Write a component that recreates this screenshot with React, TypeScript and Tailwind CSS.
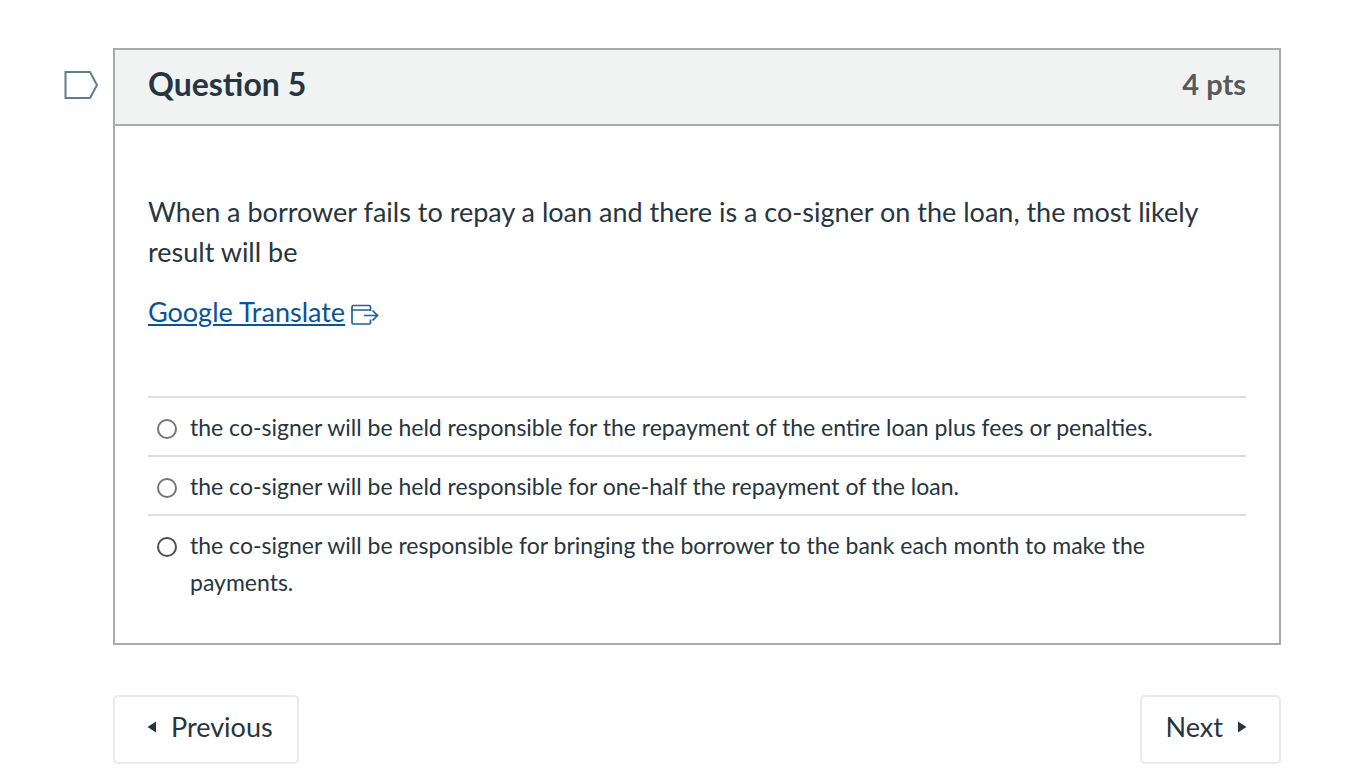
import React from "react";

const answers: string[] = [
  "the co-signer will be held responsible for the repayment of the entire loan plus fees or penalties.",
  "the co-signer will be held responsible for one-half the repayment of the loan.",
  "the co-signer will be responsible for bringing the borrower to the bank each month to make the payments.",
];

function FlagIcon() {
  return (
    <svg width="36" height="30" viewBox="0 0 36 30" fill="none" aria-hidden="true">
      <path d="M2.5 2H27L34 15L27 28H2.5Z" stroke="#5f7d90" strokeWidth="2" />
    </svg>
  );
}

function ExternalIcon() {
  return (
    <svg className="mt-[6px]" width="28" height="22" viewBox="0 0 28 22" fill="none" stroke="#1f5f9a" strokeWidth="1.7" aria-hidden="true">
      <path d="M19.5 7V3Q19.5 1.5 18 1.5H2.5Q1 1.5 1 3V18.5Q1 20 2.5 20H18Q19.5 20 19.5 18.5V15.5" />
      <path d="M1 6H19.5M13 11.5H26.5M21.5 6.5L26.5 11.5L21.5 16.5" />
    </svg>
  );
}

export default function App() {
  return (
    <main className="flex flex-col bg-white pt-12 pr-[85px] pb-1 pl-[63px] font-['Lato',sans-serif] text-[#273540]">
      <div className="flex items-start">
        <button type="button" aria-label="Flag question" className="mt-[22px] mr-[14px] shrink-0">
          <FlagIcon />
        </button>
        <section className="min-w-0 flex-1 border-2 border-[#aaaaaa]">
          <header className="flex items-center justify-between border-b-2 border-[#aaaaaa] bg-[#f1f3f3] px-[33px] pt-[14px] pb-5">
            <h1 className="text-[32px] leading-10 font-bold">Question 5</h1>
            <span className="text-[29px] leading-10 font-bold text-[#595959]">4 pts</span>
          </header>
          <div className="px-[33px] pt-[66px] pb-[33px]">
            <p className="text-[27px] leading-10">
              When a borrower fails to repay a loan and there is a co-signer on the loan, the most likely result will be
            </p>
            <p className="mt-5 text-[27px] leading-10">
              <a href="#translate" className="inline-flex items-center gap-[6px] text-[#0b5394]">
                <span className="underline">Google Translate</span>
                <ExternalIcon />
              </a>
            </p>
            <fieldset className="mt-[64px]">
              {answers.map((answer, i) => (
                <div key={answer} className="group flex items-start border-t-2 border-[#dddddd] pt-[11px] pb-[9px] pl-[9px]">
                  <input
                    type="radio"
                    name="answer"
                    id={`answer-${i}`}
                    className="mt-[10px] mr-[13px] size-5 shrink-0 appearance-none rounded-full border-2 border-[#767676] bg-white group-last:border-[#4f4f4f] checked:border-[6px]"
                  />
                  <label htmlFor={`answer-${i}`} className="text-[23px] leading-[37px]">
                    {answer}
                  </label>
                </div>
              ))}
            </fieldset>
          </div>
        </section>
      </div>
      <nav className="mt-[50px] ml-[50px] flex items-start justify-between text-[27px] leading-10">
        <button type="button" className="flex items-center gap-[15px] rounded-[5px] border-2 border-[#e8eaeb] pt-[10px] pr-6 pb-[15px] pl-8">
          <svg width="9" height="12" viewBox="0 0 9 12" fill="#273540" aria-hidden="true">
            <path d="M9 0.5V11.5L0.5 6Z" />
          </svg>
          Previous
        </button>
        <button type="button" className="flex items-center gap-[15px] rounded-[5px] border-2 border-[#e8eaeb] pt-[10px] pr-8 pb-[15px] pl-6">
          Next
          <svg width="9" height="12" viewBox="0 0 9 12" fill="#273540" aria-hidden="true">
            <path d="M0 0.5V11.5L8.5 6Z" />
          </svg>
        </button>
      </nav>
    </main>
  );
}
